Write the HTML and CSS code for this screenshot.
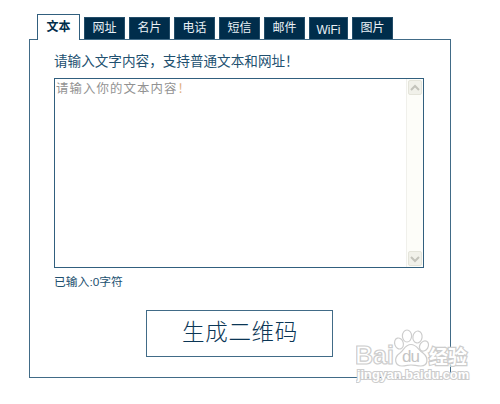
FILE: index.html
```html
<!DOCTYPE html>
<html lang="zh-CN">
<head>
  <meta charset="UTF-8">
  <title>二维码生成</title>
  <link rel="stylesheet" href="styles.css">
</head>
<body>
  <div class="qrcode">
    <div class="tabs">
      <a class="tab active">文本</a>
      <a class="tab">网址</a>
      <a class="tab">名片</a>
      <a class="tab">电话</a>
      <a class="tab">短信</a>
      <a class="tab">邮件</a>
      <a class="tab wifi">WiFi</a>
      <a class="tab">图片</a>
    </div>

    <div class="panel">
      <div class="title">请输入文字内容，支持普通文本和网址！</div>
      <div class="textbox">
        <div class="hint">请输入你的文本内容<span class="mark">！</span></div>
        <div class="scrollbar">
          <div class="arrow"><svg width="10" height="8" viewBox="0 0 10 8"><path d="M1 6 L5 2 L9 6"/></svg></div>
          <div class="arrow"><svg width="10" height="8" viewBox="0 0 10 8"><path d="M1 2 L5 6 L9 2"/></svg></div>
        </div>
      </div>
      <div class="count">已输入:0字符</div>
      <button class="submit">生成二维码</button>
    </div>

    <svg class="watermark" width="118" height="60" viewBox="0 0 118 60">
      <g class="logo">
        <text x="-1" y="36" font-size="25" textLength="39">Bai</text>
        <ellipse cx="43" cy="15.5" rx="4.3" ry="5.6" transform="rotate(-18 43 15.5)"/>
        <ellipse cx="51" cy="8" rx="4.6" ry="6"/>
        <ellipse cx="61.5" cy="9" rx="4.6" ry="6" transform="rotate(8 61.5 9)"/>
        <ellipse cx="68" cy="18" rx="4.2" ry="5.4" transform="rotate(30 68 18)"/>
        <path d="M55 16.5 C49 16.5 48 22 44 25 C37 30 39 38 46 38 C50 38 52 37 55 37 C58 37 61 38 65 38 C72 38 73 30 67 25 C62 22 61 16.5 55 16.5 Z"/>
        <text class="cjk" x="73" y="35.5" font-size="19" textLength="38">经验</text>
      </g>
      <text class="du" x="46" y="33.5" font-size="17" textLength="18">du</text>
      <text class="url" x="1" y="51" font-size="12" textLength="112" lengthAdjust="spacingAndGlyphs">jingyan.baidu.com</text>
    </svg>
  </div>
</body>
</html>
```
FILE: styles.css
```css
body {
  box-sizing: border-box;
  min-height: 404px;
  margin: 0;
  padding: 14px 0 0 29px;
  background: #fff;
  font-family: "Liberation Sans", "Noto Sans CJK SC", sans-serif;
  color: #21506f;
}

.qrcode {
  position: relative;
  width: 422px;
  height: 390px;
}

.tabs {
  display: flex;
  align-items: flex-end;
  gap: 4px;
  height: 26px;
  padding-left: 8px;
  margin-bottom: -1px;
}

.tab {
  box-sizing: border-box;
  width: 41px;
  height: 22px;
  border: 1px solid #234d69;
  border-bottom: 0;
  background: #002d4b;
  color: #e9f1f6;
  font-size: 12px;
  line-height: 21px;
  text-align: center;
  margin-bottom: 1px;
}

.tab.active {
  position: relative;
  width: 43px;
  height: 26px;
  border-color: #315f7e;
  background: #fff;
  color: #002d4b;
  font-weight: bold;
  line-height: 24px;
  margin-bottom: 0;
}

.tab.wifi {
  width: 39px;
  line-height: 24px;
}

.panel {
  box-sizing: border-box;
  width: 422px;
  height: 339px;
  border: 1px solid #416b87;
  padding: 11px 25px 0 24px;
}

.title {
  height: 27px;
  font-size: 13.6px;
  line-height: 21px;
  white-space: nowrap;
}

.textbox {
  box-sizing: border-box;
  display: flex;
  justify-content: space-between;
  width: 370px;
  height: 190px;
  border: 1px solid #315f7e;
}

.hint {
  padding-left: 1px;
  color: #929292;
  font-size: 12.4px;
  letter-spacing: 1.1px;
  line-height: 20px;
}

.mark {
  color: #e2b17f;
}

.scrollbar {
  box-sizing: border-box;
  display: flex;
  flex-direction: column;
  justify-content: space-between;
  width: 17px;
  border-left: 1px solid #f0f0eb;
  padding: 1px;
  background: #fdfdf9;
}

.arrow {
  box-sizing: border-box;
  display: flex;
  align-items: center;
  justify-content: center;
  height: 15px;
  border: 1px solid #e4e4da;
  border-radius: 2px;
  background: #f1f1ea;
}

.arrow svg {
  fill: none;
  stroke: #c3c3bb;
  stroke-width: 2;
}

.count {
  margin-top: 6px;
  font-size: 11.8px;
  line-height: 17px;
}

.submit {
  display: block;
  box-sizing: border-box;
  width: 187px;
  height: 47px;
  margin: 19px 0 0 92px;
  border: 1px solid #416b87;
  padding: 0 0 7px 1px;
  background: #fff;
  color: #0b3655;
  font-family: "Noto Sans CJK SC", sans-serif;
  font-size: 22.5px;
  font-weight: 300;
  letter-spacing: 0.7px;
}

.watermark {
  position: absolute;
  left: 327px;
  top: 314px;
  font-family: "Liberation Sans", sans-serif;
  font-weight: bold;
}

.watermark .logo,
.watermark .url {
  fill: #fff;
  stroke: #cdcdcd;
  stroke-width: 1.2;
}

.watermark .url {
  stroke-width: 2;
  paint-order: stroke;
}

.watermark .cjk {
  font-family: "Noto Sans CJK SC", sans-serif;
  stroke-width: 2.5;
  paint-order: stroke;
}

.watermark .du {
  fill: #c4c4c4;
  font-weight: normal;
}
```
